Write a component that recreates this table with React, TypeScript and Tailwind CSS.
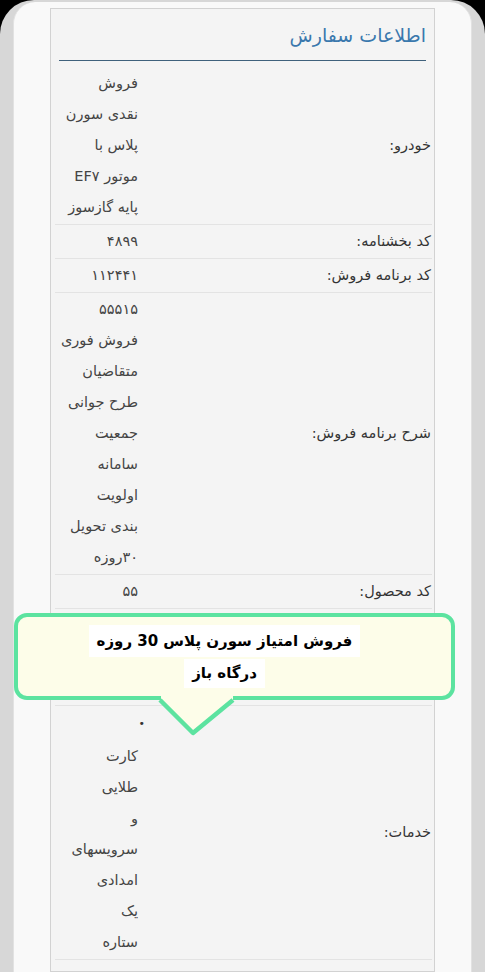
import React from 'react'

type Row = {
  label: string
  lines: string[]
}

const topRows: Row[] = [
  { label: 'خودرو:', lines: ['فروش', 'نقدی سورن', 'پلاس با', 'موتور EF۷', 'پایه گازسوز'] },
  { label: 'کد بخشنامه:', lines: ['۴۸۹۹'] },
  { label: 'کد برنامه فروش:', lines: ['۱۱۲۴۴۱'] },
  {
    label: 'شرح برنامه فروش:',
    lines: [
      '۵۵۵۱۵',
      'فروش فوری',
      'متقاضیان',
      'طرح جوانی',
      'جمعیت',
      'سامانه',
      'اولویت',
      'بندی تحویل',
      '۳۰روزه',
    ],
  },
  { label: 'کد محصول:', lines: ['۵۵'] },
]

const services = ['کارت', 'طلایی', 'و', 'سرویسهای', 'امدادی', 'یک', 'ستاره']

function InfoRow({ row }: { row: Row }) {
  return (
    <div className="flex items-center border-b border-[#e3e3e3] py-[1px]">
      <div className="flex-1 pr-[1px] text-[14.5px] text-[#333]">{row.label}</div>
      <div className="w-[84px] pr-[1px] text-[14.5px] text-[#444]">
        {row.lines.map((line) => (
          <div key={line} className="h-[31px] leading-[31px] whitespace-nowrap">
            {line}
          </div>
        ))}
      </div>
    </div>
  )
}

function Callout() {
  return (
    <>
      <div className="absolute left-[14px] top-[613px] flex h-[87px] w-[441px] flex-col items-center justify-center rounded-[13px] border-[4px] border-[#5ce3a0] bg-[#fdfde9] pr-[20px]">
        <span className="bg-white px-[8px] text-[15px] font-bold leading-[32px] text-black">
          فروش امتیاز سورن پلاس 30 روزه
        </span>
        <span className="mt-[2px] bg-white px-[8px] text-[15px] font-bold leading-[29px] text-black">
          درگاه باز
        </span>
      </div>
      <svg
        className="absolute left-[158px] top-[696px]"
        width="78"
        height="42"
        viewBox="0 0 78 42"
      >
        <polygon points="3,0 75,0 75,4 35,37 3,4" fill="#fdfde9" />
        <polyline
          points="2,4 35,37 75,4"
          fill="none"
          stroke="#5ce3a0"
          strokeWidth="4.5"
          strokeLinejoin="round"
        />
      </svg>
    </>
  )
}

export default function App() {
  return (
    <div
      dir="rtl"
      className="relative h-[972px] w-[485px] overflow-hidden bg-black"
      style={{ fontFamily: '"DejaVu Sans", "Noto Sans", sans-serif' }}
    >
      <div className="h-full rounded-t-[34px] bg-[#d7d7d7] px-[13px] pt-[2px]">
        <div className="h-full rounded-t-[22px] border-x border-[#e2e2e2] bg-[#f9f9f9] px-[36px] pt-[6px]">
          <div className="h-full border border-[#d2d2d2] bg-[#f4f4f4]">
            <div className="mr-[8px] ml-[8px] border-b border-[#3f617c] pt-[10px] pb-[9px]">
              <h2 className="text-[19px] leading-[32px] text-[#3a78ad]">اطلاعات سفارش</h2>
            </div>

            <div className="mt-[6px] mr-[2px] ml-[4px]">
              {topRows.map((row) => (
                <InfoRow key={row.label} row={row} />
              ))}

              {/* row under the callout */}
              <div className="h-[97px] border-b border-[#e3e3e3]" />

              <div className="flex items-center border-b border-[#e3e3e3] py-[1px]">
                <div className="flex-1 pr-[1px] text-[14.5px] text-[#333]">خدمات:</div>
                <div className="w-[84px] pr-[1px] text-[14.5px] text-[#444]">
                  <div className="-mr-[7px] h-[34px] leading-[34px] text-[11px] text-[#333]">•</div>
                  {services.map((line) => (
                    <div key={line} className="h-[31px] leading-[31px] whitespace-nowrap">
                      {line}
                    </div>
                  ))}
                </div>
              </div>

              <div className="h-[40px]" />
            </div>
          </div>
        </div>
      </div>

      <Callout />
    </div>
  )
}
